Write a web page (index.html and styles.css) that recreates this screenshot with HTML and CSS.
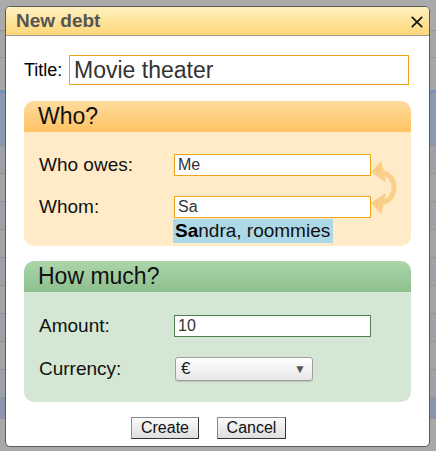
FILE: index.html
```html
<!DOCTYPE html>
<html>
<head>
<meta charset="utf-8">
<link rel="stylesheet" href="styles.css">
</head>
<body>
<div class="page">
  <div class="bg-row bg-top"></div>
  <div class="bg-row bg-a"></div>
  <div class="bg-row bg-b"></div>
  <div class="bg-rule"></div>
  <div class="bg-row bg-blue"></div>
  <div class="bg-row bg-c"></div>
  <div class="bg-row bg-d"></div>
  <div class="bg-row bg-c"></div>
  <div class="bg-row bg-d"></div>
  <div class="bg-row bg-c"></div>
  <div class="bg-row bg-d"></div>
  <div class="bg-row bg-c"></div>
  <div class="bg-row bg-d"></div>
  <div class="bg-row bg-c"></div>
  <div class="bg-row bg-blue2"></div>
</div>

<div class="dialog">
  <div class="dlg-head">
    <span class="dlg-title">New debt</span>
    <svg class="close" width="12" height="12" viewBox="0 0 12 12"><path d="M0.8 0.8 L11.2 11.2 M11.2 0.8 L0.8 11.2" stroke="#1a1a1a" stroke-width="1.8" fill="none"/></svg>
  </div>
  <div class="dlg-body">
    <div class="title-row">
      <label class="title-label">Title:</label>
      <input class="title-input" type="text" value="Movie theater">
    </div>

    <div class="panel who">
      <div class="panel-head">Who?</div>
      <div class="panel-body">
        <div class="row">
          <span class="lbl">Who owes:</span>
          <input class="field orange" type="text" value="Me">
        </div>
        <div class="row">
          <span class="lbl">Whom:</span>
          <div class="field-wrap">
            <input class="field orange" type="text" value="Sa">
            <div class="suggest"><b>Sa</b>ndra, roommies</div>
          </div>
        </div>
        <svg class="swap" width="30" height="60" viewBox="0 0 30 60">
          <path d="M10 14 C 30 15, 30 44, 10 45" stroke="#f9c06a" stroke-width="5" fill="none" stroke-linecap="round"/>
          <path d="M3 14 L12 4 L16 23 Z" fill="#f9c06a" stroke="#f9c06a" stroke-width="1.5" stroke-linejoin="round"/>
          <path d="M3 45 L12 55 L16 36 Z" fill="#f9c06a" stroke="#f9c06a" stroke-width="1.5" stroke-linejoin="round"/>
        </svg>
      </div>
    </div>

    <div class="panel much">
      <div class="panel-head">How much?</div>
      <div class="panel-body">
        <div class="row">
          <span class="lbl">Amount:</span>
          <input class="field green" type="text" value="10">
        </div>
        <div class="row">
          <span class="lbl">Currency:</span>
          <div class="select"><span>€</span><span class="caret">▼</span></div>
        </div>
      </div>
    </div>

    <div class="buttons">
      <button class="btn">Create</button>
      <button class="btn">Cancel</button>
    </div>
  </div>
</div>
</body>
</html>
```

FILE: styles.css
```css
html, body {
  margin: 0;
  padding: 0;
  background: #a8a8a8;
  font-family: "Liberation Sans", Arial, sans-serif;
  overflow: hidden;
}

.page {
  width: 436px;
  height: 451px;
  display: flex;
  flex-direction: column;
}
.bg-row {
  flex: none;
  border-bottom: 1px solid #929292;
}
.bg-top { height: 30px; background: #aaaaaa; }
.bg-a { height: 26px; background: #a6a6a6; }
.bg-b { height: 32px; background: #a6a6a6; border-bottom: none; }
.bg-rule { height: 3px; background: #7891b5; }
.bg-blue { height: 52px; background: #8a98b0; border-bottom-color: #8a8f99; }
.bg-c { height: 27px; background: #9ea1a8; }
.bg-d { height: 27px; background: #a4a4a4; }
.bg-blue2 { height: 20px; background: #8996ad; }

.dialog {
  position: absolute;
  left: 5px;
  top: 6px;
  width: 425px;
  height: 441px;
  box-sizing: border-box;
  border: 1px solid #5a5a5a;
  border-radius: 5px;
  background: #fff;
  overflow: hidden;
  display: flex;
  flex-direction: column;
}
.dlg-head {
  height: 28px;
  flex: none;
  border-bottom: 1px solid #9a9a9a;
  background: linear-gradient(#fff1bd, #fdd679);
  display: flex;
  align-items: center;
  justify-content: space-between;
  padding: 0 6px 0 10px;
}
.dlg-title {
  font-weight: bold;
  font-size: 19px;
  color: #555;
}
.close { display: block; margin-top: 1px; }

.dlg-body {
  padding: 0 18px;
  display: flex;
  flex-direction: column;
}
.title-row {
  margin-top: 19px;
  display: flex;
  align-items: center;
}
.title-label {
  font-size: 18px;
  color: #000;
  width: 45px;
}
.title-input {
  width: 340px;
  height: 30px;
  box-sizing: border-box;
  border: 1px solid #f0a41c;
  padding: 0 4px;
  margin: 0;
  font-family: "Liberation Sans", Arial, sans-serif;
  font-size: 23px;
  color: #333;
  outline: none;
}

.panel {
  border-radius: 10px;
  position: relative;
}
.panel-head {
  height: 31px;
  border-radius: 10px 10px 0 0;
  display: flex;
  align-items: center;
  padding-left: 14px;
  font-size: 23px;
  color: #111;
}
.panel-body {
  position: relative;
  border-radius: 0 0 10px 10px;
  padding: 12px 15px;
}
.who { margin-top: 16px; }
.who .panel-head { background: linear-gradient(#ffdb9e, #fec363); }
.who .panel-body { background: #ffebc8; padding-bottom: 18px; }
.who .row { height: 42px; }
.much { margin-top: 15px; }
.much .panel-head { background: linear-gradient(#abd6ab, #8ebf8e); }
.much .panel-body { background: #d4e6d4; }
.much .row { height: 43px; }

.row {
  display: flex;
  align-items: center;
}
.lbl {
  width: 135px;
  flex: none;
  font-size: 19px;
  color: #111;
}
.field-wrap { position: relative; }
.field {
  display: block;
  width: 197px;
  height: 22px;
  box-sizing: border-box;
  padding: 0 3px;
  margin: 0;
  font-family: "Liberation Sans", Arial, sans-serif;
  font-size: 16px;
  color: #333;
  background: #fff;
  outline: none;
}
.orange { border: 1px solid #f0a41c; }
.green { border: 1px solid #4f7f4f; }

.suggest {
  position: absolute;
  left: -1px;
  top: 23px;
  width: 160px;
  height: 24px;
  box-sizing: border-box;
  padding-left: 2px;
  background: #add8e6;
  font-size: 19px;
  line-height: 24px;
  color: #111;
  white-space: nowrap;
}
.suggest b { color: #000; }

.swap {
  position: absolute;
  left: 345px;
  top: 26px;
  opacity: 0.65;
}

.select {
  margin-left: 1px;
  width: 138px;
  height: 24px;
  box-sizing: border-box;
  border: 1px solid #a0a0a0;
  border-radius: 3px;
  background: linear-gradient(#ffffff, #e6e6e6);
  box-shadow: 0 1px 1px rgba(0,0,0,0.15);
  display: flex;
  align-items: center;
  justify-content: space-between;
  padding: 0 6px 0 5px;
  font-size: 17px;
  color: #222;
}
.caret {
  font-size: 12px;
  color: #555;
}

.buttons {
  margin-top: 15px;
  display: flex;
  justify-content: flex-start;
  gap: 18px;
  padding-left: 107px;
}
.btn {
  height: 22px;
  box-sizing: border-box;
  padding: 0;
  margin: 0;
  border: 1px solid #333;
  border-top-color: #8a8a8a;
  border-left-color: #8a8a8a;
  background: linear-gradient(#fbfbfb, #dedede);
  font-family: "Liberation Sans", Arial, sans-serif;
  font-size: 16px;
  color: #111;
}
.btn:first-child { width: 68px; }
.btn:last-child { width: 69px; }
```
